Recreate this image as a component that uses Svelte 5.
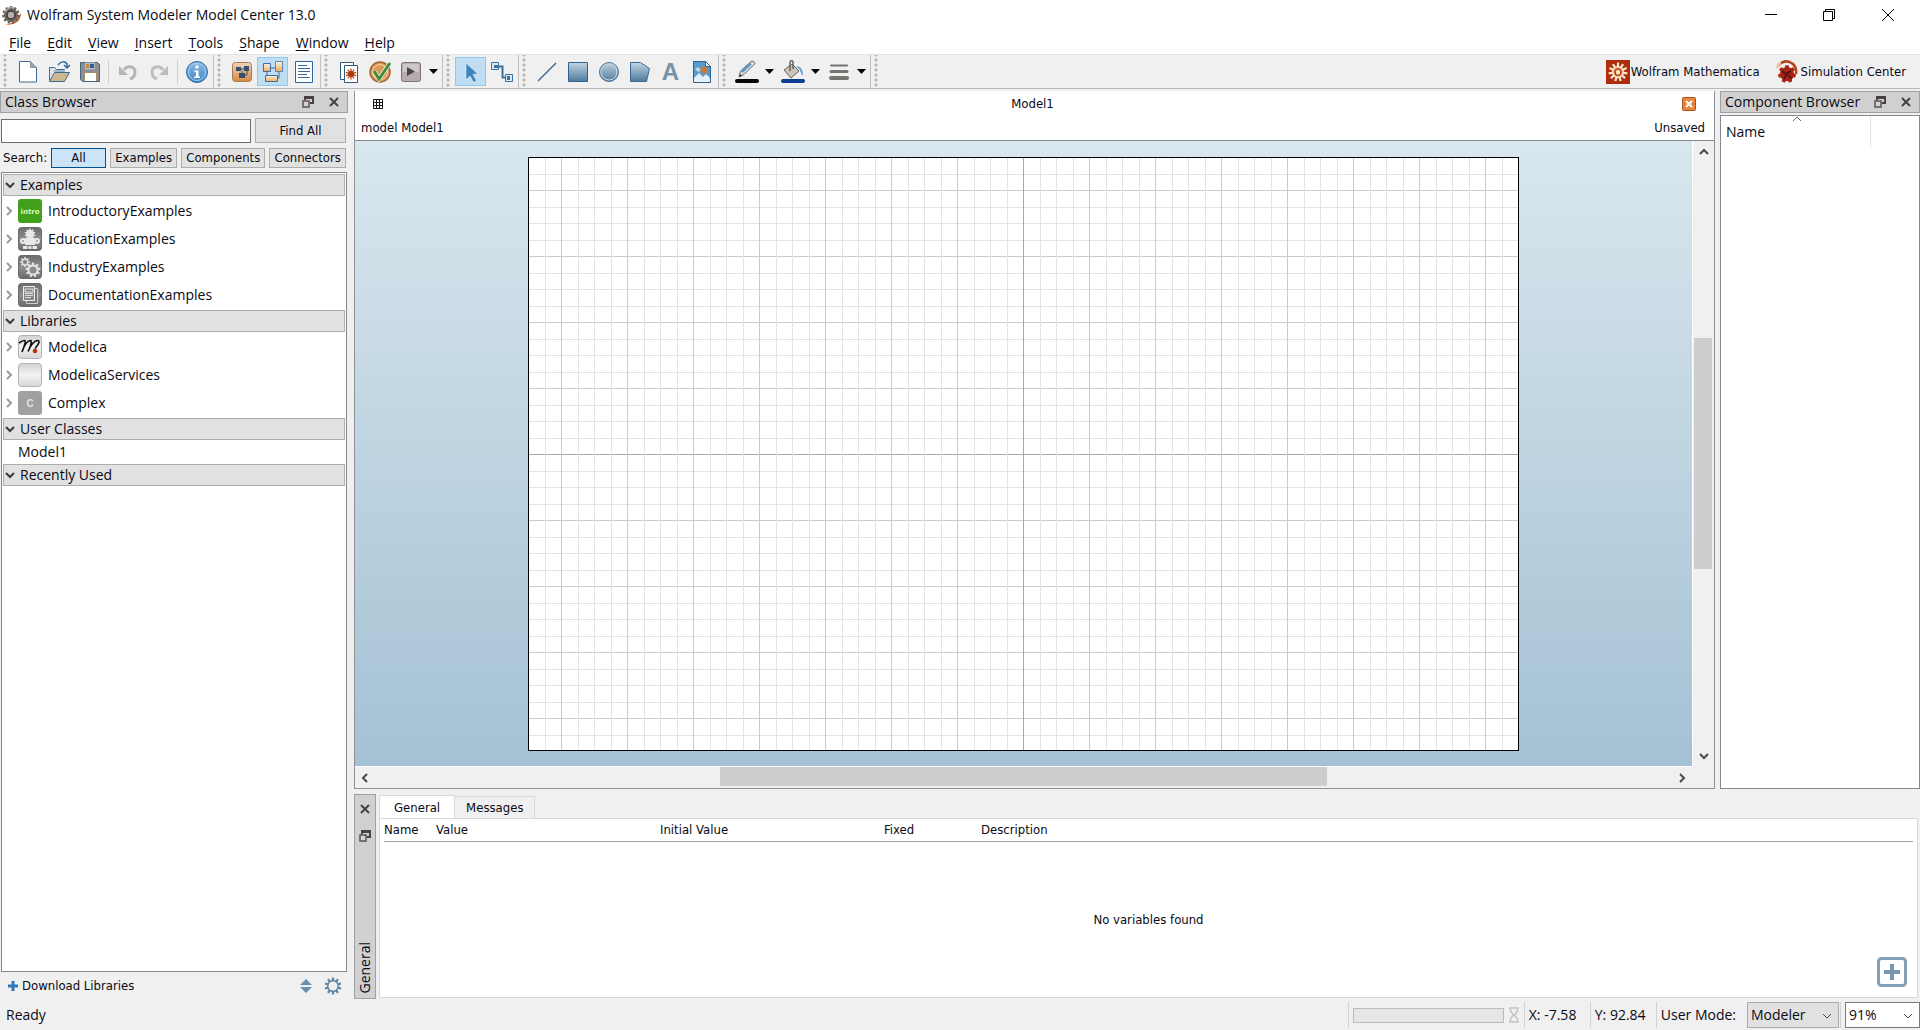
<script lang="ts">
  type Tool = { icon?: string; label?: string; active?: boolean; menu?: boolean; sep?: boolean };
  type Node = { name: string; icon: string };

  const menus = ['File', 'Edit', 'View', 'Insert', 'Tools', 'Shape', 'Window', 'Help'];
  const filters = ['All', 'Examples', 'Components', 'Connectors'];
  const columns = ['Name', 'Value', 'Initial Value', 'Fixed', 'Description'];

  const groups: Tool[][] = [
    [
      { icon: 'new', label: 'New' },
      { icon: 'open', label: 'Open' },
      { icon: 'save', label: 'Save' },
      { sep: true },
      { icon: 'undo', label: 'Undo' },
      { icon: 'redo', label: 'Redo' },
      { sep: true },
      { icon: 'info', label: 'Info' },
    ],
    [
      { icon: 'iconview', label: 'Icon view' },
      { icon: 'diagram', label: 'Diagram view', active: true },
      { icon: 'text', label: 'Text view' },
    ],
    [
      { icon: 'notebook', label: 'Documentation' },
      { icon: 'validate', label: 'Validate' },
      { icon: 'simulate', label: 'Simulate', menu: true },
    ],
    [
      { icon: 'pointer', label: 'Select', active: true },
      { icon: 'connect', label: 'Connect' },
    ],
    [
      { icon: 'line', label: 'Line' },
      { icon: 'rect', label: 'Rectangle' },
      { icon: 'ellipse', label: 'Ellipse' },
      { icon: 'polygon', label: 'Polygon' },
      { icon: 'letter', label: 'Text' },
      { icon: 'bitmap', label: 'Bitmap' },
    ],
    [
      { icon: 'pencil', label: 'Line color', menu: true },
      { icon: 'bucket', label: 'Fill color', menu: true },
      { icon: 'weight', label: 'Line style', menu: true },
    ],
  ];

  const tree: { title: string; nodes: Node[] }[] = [
    {
      title: 'Examples',
      nodes: [
        { name: 'IntroductoryExamples', icon: 'intro' },
        { name: 'EducationExamples', icon: 'education' },
        { name: 'IndustryExamples', icon: 'industry' },
        { name: 'DocumentationExamples', icon: 'docs' },
      ],
    },
    {
      title: 'Libraries',
      nodes: [
        { name: 'Modelica', icon: 'modelica' },
        { name: 'ModelicaServices', icon: 'services' },
        { name: 'Complex', icon: 'complex' },
      ],
    },
    { title: 'User Classes', nodes: [{ name: 'Model1', icon: '' }] },
    { title: 'Recently Used', nodes: [] },
  ];

  let filter = $state('All');
  let search = $state('');
  let tab = $state('General');
  let mode = $state('Modeler');
  let zoom = $state('91%');

  // diagram sheet, origin in the middle
  const sheetW = 990;
  const sheetH = 593;
  const cx = 495;
  const cy = 297;
  const step = 16.5;

  function gridLines(center: number, size: number) {
    const out: { at: number; kind: string }[] = [];
    for (let i = -40; i <= 40; i++) {
      const at = Math.round(center + i * step);
      if (at <= 0 || at >= size) continue;
      out.push({ at, kind: i === 0 ? 'axis' : i % 4 === 0 ? 'major' : 'minor' });
    }
    return out.sort((a, b) => 'minor major axis'.indexOf(a.kind) - 'minor major axis'.indexOf(b.kind));
  }

  const vertical = gridLines(cx, sheetW);
  const horizontal = gridLines(cy, sheetH);

  function gear(c: number, outer: number, inner: number, teeth: number) {
    let d = '';
    for (let i = 0; i < teeth; i++) {
      [[-0.32, inner], [-0.2, outer], [0.2, outer], [0.32, inner]].forEach(([o, r]) => {
        const a = ((i + o) / teeth) * Math.PI * 2 - Math.PI / 2;
        d += `${d ? 'L' : 'M'}${(c + r * Math.cos(a)).toFixed(2)} ${(c + r * Math.sin(a)).toFixed(2)}`;
      });
    }
    return d + 'Z';
  }
</script>

<svelte:head>
  <title>Wolfram System Modeler Model Center 13.0</title>
</svelte:head>

<!-- shared gradients -->
<svg class="defs" width="0" height="0" aria-hidden="true">
  <defs>
    <linearGradient id="steel" x1="0" y1="0" x2="0" y2="1">
      <stop offset="0" stop-color="#c3d3df" /><stop offset="1" stop-color="#4d7ba0" />
    </linearGradient>
    <linearGradient id="orange" x1="0" y1="0" x2="0" y2="1">
      <stop offset="0" stop-color="#fdf3e2" /><stop offset="1" stop-color="#f2a956" />
    </linearGradient>
    <linearGradient id="brown" x1="0" y1="0" x2="0" y2="1">
      <stop offset="0" stop-color="#f0d5b8" /><stop offset="1" stop-color="#d68a42" />
    </linearGradient>
    <linearGradient id="blue" x1="0" y1="0" x2="0" y2="1">
      <stop offset="0" stop-color="#8dbbe6" /><stop offset="1" stop-color="#3d86c6" />
    </linearGradient>
    <linearGradient id="grey" x1="0" y1="0" x2="0" y2="1">
      <stop offset="0" stop-color="#6b6b6b" /><stop offset="0.5" stop-color="#8e8e8e" /><stop offset="1" stop-color="#6b6b6b" />
    </linearGradient>
    <linearGradient id="silver" x1="0" y1="0" x2="0" y2="1">
      <stop offset="0" stop-color="#d2d2d2" /><stop offset="0.5" stop-color="#f2f2f2" /><stop offset="1" stop-color="#d6d6d6" />
    </linearGradient>
  </defs>
</svg>

{#snippet toolIcon(name: string)}
  {#if name === 'letter'}
    <span class="letter">A</span>
  {:else}
  <svg width="24" height="24" viewBox="0 0 24 24" fill="none" aria-hidden="true">
    {#if name === 'new'}
      <path d="M3.500 1.500h11l6 6v14.500h-17z" fill="#fff" stroke="#3f6b92" />
      <path d="M14.500 1.500v6h6z" fill="#9aa6b0" stroke="#8a959e" />
    {:else if name === 'open'}
      <path d="M2.500 20.500V7.500h5l2 2h8v3" fill="#dbe6ee" stroke="#3f6b92" />
      <path d="M2.500 21.500l5-9h15l-5 9z" fill="#cdb78f" stroke="#3f6b92" />
      <path d="M6 10h12v2H8z" fill="#9db6c8" />
      <path d="M11 5c3-4 7-4 9-1v3m-3-2l3 3 3-3" stroke="#2e6a9e" stroke-width="1.500" />
    {:else if name === 'save'}
      <path d="M2.500 2.500h17l2 2v17h-17l-2-2z" fill="#8c8f92" stroke="#46637f" />
      <path d="M5 12h15v9H5z" fill="#a58c69" />
      <path d="M7 13h11v8H7z" fill="#fff" />
      <path d="M7 2.500h10v7H7z" fill="#b4bcc4" /><path d="M8 4h3v4H8z" fill="#c28a4a" /><path d="M12 4h4v4h-4z" fill="#2d5d8d" />
    {:else if name === 'undo'}
      <path d="M8 10c3-5 11-4 11 2 0 4-2 6-5 7" stroke="#b5b5b5" stroke-width="3" />
      <path d="M3 6v9h9z" fill="#b5b5b5" />
    {:else if name === 'redo'}
      <path d="M16 10c-3-5-11-4-11 2 0 4 2 6 5 7" stroke="#bdbdbd" stroke-width="3" />
      <path d="M21 6v9h-9z" fill="#bdbdbd" />
    {:else if name === 'info'}
      <circle cx="12" cy="12" r="10.500" fill="url(#blue)" stroke="#2c6aa5" />
      <circle cx="12" cy="12" r="8.500" stroke="#a9cdee" />
      <circle cx="12" cy="7" r="1.800" fill="#fff" />
      <path d="M9.500 10.500h4v6h1.500V18h-6v-1.500h2V12H9.500z" fill="#fff" />
    {:else if name === 'iconview'}
      <rect x="2.500" y="2.500" width="19" height="19" rx="3" fill="url(#brown)" stroke="#a87a50" />
      <path d="M6 7h5v4H6zM14 6h5v5h-5zM9 13h6v5H9z" fill="#34506c" />
      <path d="M11 9h3M12 11v3M17 11v4h-3" stroke="#34506c" />
    {:else if name === 'diagram'}
      <path d="M9 8h6M6 11v7h-2M18 11v7h-2" stroke="#3a6ea0" />
      <path d="M2.500 3.500h7v8h-7z" fill="url(#orange)" stroke="#3a6ea0" />
      <path d="M14.500 1.500h7v10h-7z" fill="url(#orange)" stroke="#5b86ad" />
      <path d="M4.500 15.500h12v6h-12z" fill="url(#orange)" stroke="#3a6ea0" />
    {:else if name === 'text'}
      <path d="M3.500 1.500h17v21h-17z" fill="#fff" stroke="#2f669a" />
      <path d="M6 5.500h9M6 8.500h12M6 11.500h12M6 14.500h9M6 17.500h12" stroke="#3a6a99" />
    {:else if name === 'notebook'}
      <path d="M3.500 2.500h13v17h-13z" fill="#fff" stroke="#35597c" />
      <path d="M7.500 5.500h13v17h-13z" fill="#fff" stroke="#35597c" />
      <g transform="translate(7 7)"><path d={gear(7, 5.5, 3, 10)} fill="#bf4a16" /><circle cx="7" cy="7" r="3" fill="#a8380f" /></g>
    {:else if name === 'validate'}
      <circle cx="12" cy="12" r="10" fill="#dc9a56" stroke="#a0683a" stroke-width="1.500" />
      <circle cx="12" cy="12" r="7.500" stroke="#f4d3a6" />
      <path d="M6 11l5 8L22 3" stroke="#fff" stroke-width="4" /><path d="M6 11l5 8L22 3" stroke="#3f8a3a" stroke-width="3" />
    {:else if name === 'simulate'}
      <rect x="2.500" y="2.500" width="19" height="19" rx="2" fill="#b5abb0" stroke="#7d7479" />
      <path d="M4 4h16v8H4z" fill="#cdc6ca" /><path d="M8 7v9l8-4.500z" fill="#50444b" />
    {:else if name === 'pointer'}
      <path d="M7 3l12 11-5 .5 3.500 6-3 2-3.500-6.500-4 4z" fill="#3f86bd" stroke="#fff" stroke-width="0.500" />
    {:else if name === 'connect'}
      <path d="M9 6.500h3.500v11H16" stroke="#3d709c" stroke-width="2" />
      <path d="M1.500 2.500h7v7h-7zM15.500 14.500h7v7h-7z" fill="#dbe8f2" stroke="#3d709c" />
      <path d="M4 5h4v3H4zM17 16h3v4h-3z" fill="#3d709c" />
    {:else if name === 'line'}
      <path d="M3 21L21 3" stroke="#44698c" stroke-width="1.500" />
    {:else if name === 'rect'}
      <path d="M2.500 2.500h19v19h-19z" fill="url(#steel)" stroke="#2f628f" />
    {:else if name === 'ellipse'}
      <circle cx="12" cy="12" r="9.500" fill="url(#steel)" stroke="#52738f" /><circle cx="12" cy="12" r="8" stroke="#c7d6e2" />
    {:else if name === 'polygon'}
      <path d="M2.500 2.500h10l9 6-3 13h-16z" fill="url(#steel)" stroke="#3c6a94" />
    {:else if name === 'bitmap'}
      <path d="M3.500 1.500h12l5 5v16h-17z" fill="#5b9bcb" stroke="#2f628f" />
      <path d="M15.500 1.500v5h5z" fill="#fff" stroke="#2f628f" />
      <path d="M4 18l5-5 4 4 3-3 4 4v4H4z" fill="#e6f0f8" />
      <circle cx="14" cy="10" r="3.500" fill="#c77a35" />
      <path d="M5 9l3-2 3 3-3 2z" fill="#b9d6ea" />
    {:else if name === 'pencil'}
      <path d="M4 17l1.500-6L16 1.500q3-1.500 4 2L9 14.500z" fill="#d3dde5" stroke="#6c6c66" />
      <path d="M7 12L16 3.500" stroke="#4d93cf" stroke-width="2" /><path d="M4 17l1-3 2 2z" fill="#333" />
      <path d="M2 21h20" stroke="#060606" stroke-width="4" stroke-linecap="round" />
    {:else if name === 'bucket'}
      <path d="M3 10l8-6 7 7-8 7z" fill="#c9c4b8" stroke="#66655f" />
      <path d="M9 11V2q2-3 3 0v7" stroke="#66655f" stroke-width="1.500" />
      <path d="M15 6q7 0 7 10-2-2-3-6z" fill="#5a9bd0" />
      <path d="M2 21h20" stroke="#0d3d92" stroke-width="4" stroke-linecap="round" />
    {:else if name === 'weight'}
      <path d="M4 5.500h16" stroke="#747470" stroke-width="2" stroke-linecap="round" />
      <path d="M4 11.500h16" stroke="#747470" stroke-width="3" stroke-linecap="round" />
      <path d="M4 18h16" stroke="#747470" stroke-width="4" stroke-linecap="round" />
    {/if}
  </svg>
  {/if}
{/snippet}

{#snippet nodeIcon(name: string)}
  <svg width="24" height="24" viewBox="0 0 24 24" fill="none" aria-hidden="true">
    {#if name === 'intro'}
      <rect width="24" height="24" rx="3" fill="#43a01c" />
      <text x="12" y="15" text-anchor="middle" class="intro">intro</text>
    {:else if name === 'services' || name === 'modelica'}
      <rect x="0.500" y="0.500" width="23" height="23" rx="3" fill="url(#silver)" stroke="#b3b3b3" />
      {#if name === 'modelica'}
        <path d="M1 8q4-3 6-2.500Q8 7 4 17 8 5 13 5.500q1 3-3 11Q15 5 20 5.500q3 1-3 8" stroke="#111" stroke-width="1.600" />
        <circle cx="17" cy="16" r="2.300" fill="#b53513" />
      {/if}
    {:else if name === 'complex'}
      <rect width="24" height="24" rx="3" fill="#a0a0a0" />
      <text x="12" y="16" text-anchor="middle" class="complex">C</text>
    {:else}
      <rect x="0.500" y="0.500" width="23" height="23" rx="3" fill="url(#grey)" stroke="#6b6b6b" />
      {#if name === 'education'}
        <g transform="translate(6 1)"><path d={gear(6, 5.5, 4, 10)} fill="#e8e8e8" /></g>
        <path d="M7 11h10v7H7zM5 19h14v3H5z" fill="#e8e8e8" />
        <circle cx="5" cy="14" r="3" fill="#e8e8e8" /><circle cx="19" cy="14" r="3" fill="#e8e8e8" />
        <path d="M5 18.500h14M10 19v3M14 19v3M4 14h2M18 14h2" stroke="#777" />
      {:else if name === 'industry'}
        <g transform="translate(2 2)"><path d={gear(5, 5, 3.5, 8)} fill="#e0e0e0" /><circle cx="5" cy="5" r="2" fill="#7c7c7c" /></g>
        <g transform="translate(7 7)"><path d={gear(8, 7.500, 5.500, 9)} fill="#e4e4e4" /><circle cx="8" cy="8" r="3.500" fill="#8c8c8c" /></g>
      {:else}
        <path d="M8.500 5.500h11v15h-11z" fill="#777" stroke="#ccc" />
        <path d="M5.500 3.500h11v14h-11z" fill="#888" stroke="#eee" />
        <path d="M7 6h8v3H7zM7 10.500h8M7 12.500h8M7 14.500h6" stroke="#ddd" />
      {/if}
    {/if}
  </svg>
{/snippet}

{#snippet chevron(turn: string)}
  <svg class="chevron {turn}" width="12" height="12" viewBox="0 0 12 12" aria-hidden="true">
    <path d="M2 4l4 4 4-4" fill="none" stroke="currentColor" stroke-width="2" />
  </svg>
{/snippet}

{#snippet floatIcon()}
  <svg width="12" height="12" viewBox="0 0 12 12" aria-hidden="true">
    <path d="M3 4V1h8v6H8M3 2h8" fill="none" stroke="#4a4040" stroke-width="2" />
    <path d="M1 5h6v6H1z" fill="#d4d4d4" stroke="#5a5050" stroke-width="1.500" />
  </svg>
{/snippet}

{#snippet closeIcon()}
  <svg width="12" height="12" viewBox="0 0 12 12" aria-hidden="true">
    <path d="M2 2l8 8M10 2l-8 8" stroke="#4a4040" stroke-width="2" />
  </svg>
{/snippet}

{#snippet dockTitle(title: string)}
  <header class="dock-title">
    <h2>{title}</h2>
    <button aria-label="Float">{@render floatIcon()}</button>
    <button aria-label="Close">{@render closeIcon()}</button>
  </header>
{/snippet}

<div class="window">
  <header class="titlebar">
    <svg width="20" height="24" viewBox="0 0 20 24" aria-hidden="true">
      <path d="M19 10q0 12-16 12 10-2 13-8" fill="#d65f22" />
      <path d={gear(9, 9, 7, 11)} transform="translate(0 3)" fill="#6b6663" />
      <circle cx="9" cy="12" r="4" fill="#b5b1ae" stroke="#3f3a38" stroke-width="1.500" />
      <path d="M3 9q4-6 9-4" fill="none" stroke="#a7a29f" stroke-width="1.500" />
    </svg>
    <h1>Wolfram System Modeler Model Center 13.0</h1>
    <div class="window-buttons">
      <button aria-label="Minimize">
        <svg width="14" height="14" viewBox="0 0 14 14"><path d="M1 6.500h12" stroke="#000" /></svg>
      </button>
      <button aria-label="Restore">
        <svg width="14" height="14" viewBox="0 0 14 14"><path d="M1.500 3.500h9v9h-9zM3.500 3.500v-2h9v9h-2" fill="none" stroke="#000" /></svg>
      </button>
      <button aria-label="Close">
        <svg width="14" height="14" viewBox="0 0 14 14"><path d="M1 1l12 12M13 1L1 13" stroke="#000" /></svg>
      </button>
    </div>
  </header>

  <nav class="menubar">
    {#each menus as menu}
      <button><u>{menu[0]}</u>{menu.slice(1)}</button>
    {/each}
  </nav>

  <div class="toolbar">
    {#each groups as group}
      <div class="tool-group">
        <span class="handle"></span>
        {#each group as tool}
          {#if tool.sep}
            <span class="tool-sep"></span>
          {:else}
            <button class="tool" class:active={tool.active} aria-label={tool.label}>
              {@render toolIcon(tool.icon ?? '')}
            </button>
            {#if tool.menu}
              <button class="tool-menu" aria-label="{tool.label} options">
                <svg width="9" height="5" viewBox="0 0 9 5"><path d="M0 0h9L4.500 5z" fill="#000" /></svg>
              </button>
            {/if}
          {/if}
        {/each}
      </div>
    {/each}
    <span class="handle"></span>
    <div class="apps">
      <button>
        <svg width="24" height="24" viewBox="0 0 24 24" aria-hidden="true">
          <path d="M0 0h24v24H0z" fill="#ae2d0c" />
          <path d={gear(12, 9.5, 6, 11)} fill="#fbe9cf" />
          <circle cx="12" cy="12" r="4.500" fill="#d9772e" />
          <path d="M12 9l3 2-1 4h-4l-1-4z" fill="#fbe3bd" stroke="#ae2d0c" />
        </svg>
        Wolfram Mathematica
      </button>
      <button>
        <svg width="24" height="24" viewBox="0 0 24 24" aria-hidden="true">
          <path d="M2 6Q9-2 17 4q4 4 3 10" fill="none" stroke="#b5451e" stroke-width="2.500" />
          <path d="M1 8Q2 4 5 3" fill="none" stroke="#efc49c" stroke-width="2.500" />
          <path d={gear(11, 9, 7, 7)} transform="translate(0 3)" fill="#a8230f" />
          <path d="M6 11l4 3 5-3M11 14l-3 5M12 15l4 4" fill="none" stroke="#4a1020" stroke-width="1.500" />
        </svg>
        Simulation Center
      </button>
    </div>
  </div>

  <main>
    <aside class="class-browser">
      {@render dockTitle('Class Browser')}
      <div class="search-row">
        <input type="text" aria-label="Search classes" bind:value={search} />
        <button class="push">Find All</button>
      </div>
      <div class="filter-row">
        <span>Search:</span>
        {#each filters as f}
          <button class="push" class:checked={filter === f} onclick={() => (filter = f)}>{f}</button>
        {/each}
      </div>
      <div class="tree">
        {#each tree as section}
          <section>
            <button class="section-title">{@render chevron('down')}{section.title}</button>
            {#if section.nodes.length}
              <ul>
                {#each section.nodes as node}
                  <li class:plain={!node.icon}>
                    {#if node.icon}
                      {@render chevron('right')}
                      {@render nodeIcon(node.icon)}
                    {/if}
                    <span>{node.name}</span>
                  </li>
                {/each}
              </ul>
            {/if}
          </section>
        {/each}
      </div>
      <footer class="tree-footer">
        <button class="download">
          <svg width="10" height="10" viewBox="0 0 10 10" aria-hidden="true"><path d="M5 0v10M0 5h10" stroke="#2f78b8" stroke-width="3" /></svg>
          Download Libraries
        </button>
        <button aria-label="Expand or collapse">
          <svg width="14" height="16" viewBox="0 0 14 16"><path d="M1 7l6-6 6 6zM1 9h12l-6 6z" fill="#6b8fab" /></svg>
        </button>
        <button aria-label="Settings">
          <svg width="18" height="18" viewBox="0 0 18 18">
            <path d={gear(9, 8.5, 6, 10)} fill="#5f86a5" />
            <circle cx="9" cy="9" r="4.500" fill="#f0f0f0" />
          </svg>
        </button>
      </footer>
    </aside>

    <div class="work">
      <div class="upper">
        <section class="editor">
          <header class="editor-tab">
            <svg width="10" height="10" viewBox="0 0 10 10" aria-hidden="true">
              <path d="M.5 .5h9v9h-9zM3.500 0v10M6.500 0v10M0 3.500h10M0 6.500h10" fill="none" stroke="#111" />
            </svg>
            <h2>Model1</h2>
            <button aria-label="Close Model1">
              <svg width="14" height="14" viewBox="0 0 14 14">
                <rect x="0.500" y="0.500" width="13" height="13" rx="1" fill="#e8853c" stroke="#b0501a" />
                <path d="M4 4l6 6M10 4l-6 6" stroke="#fff" stroke-width="2" />
              </svg>
            </button>
          </header>
          <div class="editor-info"><span>model Model1</span><span>Unsaved</span></div>
          <div class="view">
            <div class="canvas">
              <svg width={sheetW + 1} height={sheetH + 1} shape-rendering="crispEdges">
                <rect x="0.5" y="0.5" width={sheetW} height={sheetH} fill="#fff" />
                {#each horizontal as l}
                  <line class={l.kind} x1="0" x2={sheetW} y1={l.at + 0.5} y2={l.at + 0.5} />
                {/each}
                {#each vertical as l}
                  <line class={l.kind} y1="0" y2={sheetH} x1={l.at + 0.5} x2={l.at + 0.5} />
                {/each}
                <rect x="0.5" y="0.5" width={sheetW} height={sheetH} fill="none" stroke="#000" />
              </svg>
            </div>
            <div class="vbar">
              {@render chevron('up')}
              <div class="track"><span class="thumb"></span></div>
              {@render chevron('down')}
            </div>
            <div class="hbar">
              {@render chevron('left')}
              <div class="track"><span class="thumb"></span></div>
              {@render chevron('right')}
            </div>
            <div class="corner"></div>
          </div>
        </section>

        <aside class="component-browser">
          {@render dockTitle('Component Browser')}
          <div class="component-list">
            <button class="name-col">
              <svg width="10" height="6" viewBox="0 0 10 6" aria-hidden="true"><path d="M1 5l4-4 4 4" fill="none" stroke="#6a6a6a" /></svg>
              Name
            </button>
          </div>
        </aside>
      </div>

      <section class="lower">
        <header class="side-title">
          <button aria-label="Close">{@render closeIcon()}</button>
          <button aria-label="Float">{@render floatIcon()}</button>
          <h2>General</h2>
        </header>
        <div class="tabbed">
          <div class="tabs" role="tablist">
            {#each ['General', 'Messages'] as t}
              <button role="tab" aria-selected={tab === t} class:current={tab === t} onclick={() => (tab = t)}>{t}</button>
            {/each}
          </div>
          <div class="tab-panel">
            <table>
              <colgroup>
                <col class="c-name" /><col class="c-value" /><col class="c-value" /><col class="c-fixed" /><col />
              </colgroup>
              <thead>
                <tr>{#each columns as c}<th>{c}</th>{/each}</tr>
              </thead>
              <tbody>
                <tr><td colspan="5">No variables found</td></tr>
              </tbody>
            </table>
            <button class="add" aria-label="Add variable">
              <svg width="30" height="30" viewBox="0 0 30 30">
                <rect x="1.500" y="1.500" width="27" height="27" rx="3" fill="#fff" stroke="#83a0b8" stroke-width="3" />
                <path d="M15 7v16M7 15h16" stroke="#7797b1" stroke-width="4" />
              </svg>
            </button>
          </div>
        </div>
      </section>
    </div>
  </main>

  <footer class="statusbar">
    <span class="ready">Ready</span>
    <div class="cell busy">
      <div class="progress"></div>
    </div>
    <div class="glass">
      <svg width="10" height="16" viewBox="0 0 10 16" aria-hidden="true">
        <path d="M0 1h10M0 15h10M1.500 1v3l3 4-3 4v3M8.500 1v3l-3 4 3 4v3" fill="none" stroke="#c4c4c4" stroke-width="1.500" />
      </svg>
    </div>
    <div class="cell coord">X: -7.58</div>
    <div class="cell coord">Y: 92.84</div>
    <div class="cell mode">
      <label for="mode">User Mode:</label>
      <span class="combo">
        <select id="mode" bind:value={mode}><option>Modeler</option></select>
        {@render chevron('thin')}
      </span>
    </div>
    <div class="cell">
      <span class="combo zoom">
        <select aria-label="Zoom" bind:value={zoom}><option>91%</option></select>
        {@render chevron('thin')}
      </span>
    </div>
  </footer>
</div>

<style>
  :global(body) { margin: 0; overflow: hidden; }

  .defs { position: absolute; }
  svg { display: block; flex: none; }
  h1, h2 { margin: 0; font-weight: 400; }
  button {
    padding: 0; border: 0; background: none; color: inherit; font: inherit;
    display: flex; align-items: center; justify-content: center; white-space: nowrap;
  }

  .window {
    height: 100vh; display: flex; flex-direction: column;
    background: #f0f0f0; color: #0a0a14;
    font-family: 'DejaVu Sans Condensed', 'Open Sans', sans-serif;
    font-size: 13px; line-height: 16px;
  }
  .titlebar, .menubar, .dock-title, .side-title, .tree, .component-list, .statusbar, select {
    font-family: 'Open Sans', 'Noto Sans', sans-serif;
    font-size: 14px; line-height: 20px;
  }
  h1, h2 { font-size: inherit; }

  .titlebar { display: flex; align-items: center; height: 30px; background: #fff; padding: 0 2px; }
  .titlebar h1 { margin-left: 5px; flex: 1; }
  .window-buttons { display: flex; }
  .window-buttons button { width: 58px; height: 28px; }
  .window-buttons button:last-child { width: 60px; }

  .menubar { display: flex; height: 24px; background: #fff; padding-left: 1px; border-bottom: 1px solid #e4e4e4; }
  .menubar button { padding: 2px 8px 0; }
  .menubar u { text-underline-offset: 2px; }

  .toolbar { display: flex; height: 33px; border-bottom: 1px solid #b8b8b8; }
  .tool-group { display: flex; align-items: center; padding-right: 1px; border-right: 1px solid #c0c0c0; }
  .handle {
    width: 12px; align-self: stretch;
    background: radial-gradient(circle at 5px 3px, #b4b4b4 1px, transparent 2px) 0 2px / 12px 5px repeat-y;
  }
  .tool { width: 31px; height: 29px; box-sizing: border-box; }
  .tool.active { background: #bfddf3; border: 1px solid #90c8f0; }
  .tool-menu { width: 15px; height: 29px; }
  .tool-sep { width: 1px; height: 24px; margin: 0 3px; background: #cfcfcf; }
  .letter { font: 700 24px/28px 'Liberation Sans', sans-serif; color: #7892a8; }
  .apps { display: flex; margin-left: auto; gap: 16px; padding-right: 14px; }
  .apps button { gap: 1px; }

  main { flex: 1; min-height: 0; display: flex; gap: 6px; padding-top: 2px; }

  .dock-title {
    display: flex; align-items: center; gap: 14px; height: 20px; flex: none;
    padding: 0 7px 0 4px; background: #d0d0d0; border: 1px solid #a0a0a4;
  }
  .dock-title h2 { flex: 1; white-space: nowrap; }

  .class-browser { width: 348px; display: flex; flex-direction: column; }
  .search-row { display: flex; gap: 4px; padding: 5px 2px 0 1px; height: 25px; }
  .search-row input { flex: 1; min-width: 0; border: 1px solid #6e6e6e; background: #fff; margin: 1px 0 0; padding: 0 4px; box-sizing: border-box; }
  .search-row .push { width: 91px; }
  .push { background: #e1e1e1; border: 1px solid #adadad; box-sizing: border-box; }
  .filter-row { display: flex; align-items: center; gap: 4px; padding: 5px 2px 0 3px; height: 20px; }
  .filter-row .push { height: 20px; flex: 1 1 auto; }
  .filter-row .push.checked { flex: 0 0 55px; background: #cce4f7; border: 1px solid #00518f; }

  .tree { flex: 1; margin: 4px 1px 0; border: 1px solid #828790; background: #fff; padding: 1px; }
  .section-title {
    width: 100%; height: 22px; margin-bottom: 1px; justify-content: flex-start; gap: 4px;
    background: #e1e1e1; border: 1px solid #adadad;
  }
  .tree ul { list-style: none; margin: 0; padding: 0 0 1px; }
  .tree li { display: flex; align-items: center; height: 28px; }
  .tree li :global(.chevron) { color: #9a9a9a; margin-right: 3px; }
  .tree li span { margin-left: 6px; }
  .tree li.plain { height: 22px; padding-left: 9px; }
  .intro { font: 700 7px 'DejaVu Sans', sans-serif; fill: #d7f5c5; }
  .complex { font: 700 10px 'Liberation Sans', sans-serif; fill: #e4e4e4; }

  .tree-footer { display: flex; align-items: center; gap: 11px; height: 28px; padding: 0 6px 0 8px; }
  .download { gap: 4px; margin-right: auto; }

  .chevron { color: #4a4a4a; }
  .section-title .chevron { color: #40383a; }
  .up { transform: rotate(180deg); }
  .left { transform: rotate(90deg); }
  .right { transform: rotate(-90deg); }

  .work { flex: 1; min-width: 0; display: flex; flex-direction: column; gap: 5px; }
  .upper { flex: 1; min-height: 0; display: flex; gap: 5px; }
  .editor { flex: 1; min-width: 0; display: flex; flex-direction: column; background: #fff; border: 1px solid #909096; border-top: 0; }
  .editor-tab { display: flex; align-items: center; height: 25px; padding: 0 18px; }
  .editor-tab h2 { flex: 1; text-align: center; }
  .editor-info { display: flex; justify-content: space-between; align-items: center; height: 24px; padding: 0 9px 0 6px; border-bottom: 1px solid #828790; }
  .view { flex: 1; min-height: 0; display: grid; grid-template: minmax(0, 1fr) 22px / minmax(0, 1fr) 22px; }
  .canvas { display: flex; align-items: center; justify-content: center; overflow: hidden; background: linear-gradient(#d9e7ee, #a4c1d4); }
  .minor { stroke: #e4e4e4; }
  .major { stroke: #cbcbcb; }
  .axis { stroke: #a8a8a8; }
  .vbar, .hbar { display: flex; align-items: center; background: #f0f0f0; }
  .vbar { flex-direction: column; padding: 5px 0 4px; border-left: 1px solid #fff; }
  .hbar { padding: 0 4px; border-top: 1px solid #fff; }
  .corner { background: #f0f0f0; }
  .track { flex: 1; display: flex; align-self: stretch; }
  .vbar .track { flex-direction: column; padding: 0 2px 0 1px; }
  .hbar .track { padding-bottom: 2px; }
  .thumb { background: #cdcdcd; }
  .vbar .thumb { height: 39%; margin-top: 180px; }
  .hbar .thumb { width: calc(47% - 6px); margin-left: 349px; }

  .component-browser { width: 200px; display: flex; flex-direction: column; gap: 2px; }
  .component-list { flex: 1; background: #fff; border: 1px solid #828790; }
  .name-col { position: relative; width: 150px; height: 31px; padding-left: 5px; justify-content: flex-start; border-right: 1px solid #e2e2e2; }
  .name-col svg { position: absolute; top: 0; left: 71px; }

  .lower { display: flex; gap: 3px; height: 206px; }
  .side-title {
    width: 20px; display: flex; flex-direction: column; align-items: center; gap: 15px;
    padding: 8px 0 4px; background: #d0d0d0; border: 1px solid #a0a0a4;
    margin-bottom: 1px;
  }
  .side-title h2 { margin-top: auto; writing-mode: vertical-rl; transform: rotate(180deg); }
  .tabbed { flex: 1; min-width: 0; display: flex; flex-direction: column; padding: 0 2px 2px 0; }
  .tabs { display: flex; align-items: flex-end; height: 24px; }
  .tabs button { height: 22px; padding: 0 11px; border: 1px solid #d9d9d9; border-width: 1px 1px 0 0; }
  .tabs .current { height: 24px; padding: 0 14px; background: #fff; border-left-width: 1px; margin-bottom: -1px; position: relative; }
  .tab-panel { position: relative; flex: 1; display: flex; padding: 0 4px; background: #fff; border: 1px solid #d9d9d9; }
  table { flex: 1; table-layout: fixed; width: 100%; height: 100%; border-collapse: collapse; }
  .c-name { width: 52px; }
  .c-value { width: 224px; }
  .c-fixed { width: 97px; }
  th { height: 22px; padding: 0; text-align: left; font-weight: 400; border-bottom: 1px solid #a0a0a0; }
  td { text-align: center; padding: 0; }
  .add { position: absolute; right: 10px; bottom: 10px; }

  .statusbar { display: flex; align-items: center; height: 30px; }
  .ready { flex: 1; padding-left: 6px; }
  .cell { display: flex; align-items: center; height: 26px; padding: 0 4px; border-left: 1px solid #d2d2d2; box-sizing: border-box; }
  .progress { width: 149px; height: 13px; background: #e6e6e6; border: 1px solid #bcbcbc; }
  .busy { padding-right: 0; }
  .glass { width: 20px; display: flex; justify-content: center; }
  .coord { width: 66px; }
  .mode { padding-right: 1px; }
  .mode label { margin-right: 11px; }
  .combo { position: relative; display: flex; }
  .combo select {
    appearance: none; width: 92px; height: 26px; padding: 0 3px; color: inherit;
    background: #e1e1e1; border: 1px solid #adadad; border-radius: 0;
  }
  .combo .chevron { position: absolute; right: 6px; top: 8px; pointer-events: none; }
  .combo :global(.chevron path) { stroke-width: 1px; }
  .zoom { margin-right: -4px; }
  .zoom select { width: 75px; background: #fff; border-color: #7a7a7a; }
</style>
